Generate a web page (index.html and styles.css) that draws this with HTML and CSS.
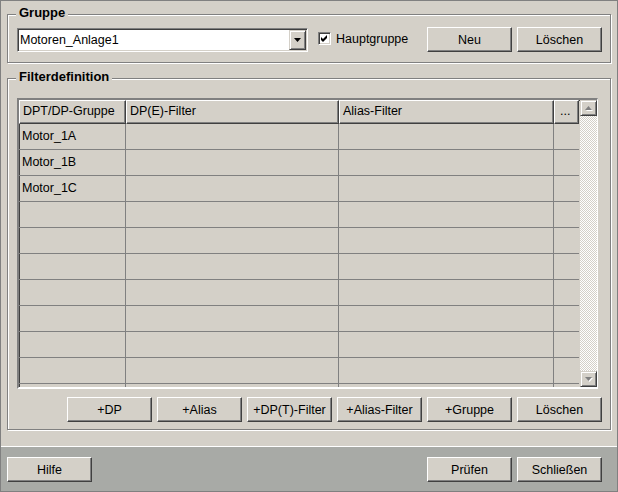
FILE: index.html
```html
<!DOCTYPE html>
<html lang="de">
<head>
<meta charset="utf-8">
<title>Filter</title>
<link rel="stylesheet" href="styles.css">
</head>
<body>
<div class="window">
  <div class="main">
    <div class="frame frame-gruppe">
      <span class="legend">Gruppe</span>
      <div class="row">
        <div class="combo">
          <span class="combo-text">Motoren_Anlage1</span>
          <span class="combo-btn"><svg width="7" height="4" viewBox="0 0 7 4"><path d="M0 0h7L3.5 4z" fill="#000"/></svg></span>
        </div>
        <label class="check">
          <span class="check-box"><svg width="9" height="9" viewBox="0 0 9 9"><path d="M1 3L3 5L7 1L7 4L3 8L1 6Z" fill="#000"/></svg></span>
          <span class="check-label">Hauptgruppe</span>
        </label>
        <div class="btn-group">
          <button class="btn">Neu</button>
          <button class="btn">Löschen</button>
        </div>
      </div>
    </div>

    <div class="frame frame-filter">
      <span class="legend">Filterdefinition</span>
      <div class="table">
        <div class="grid">
          <div class="head">
            <div class="hcell c1">DPT/DP-Gruppe</div>
            <div class="hcell c2">DP(E)-Filter</div>
            <div class="hcell c3">Alias-Filter</div>
            <div class="hcell c4 dots">...</div>
          </div>
          <div class="body">
            <div class="trow"><div class="cell c1">Motor_1A</div><div class="cell c2"></div><div class="cell c3"></div><div class="cell c4"></div></div>
            <div class="trow"><div class="cell c1">Motor_1B</div><div class="cell c2"></div><div class="cell c3"></div><div class="cell c4"></div></div>
            <div class="trow"><div class="cell c1">Motor_1C</div><div class="cell c2"></div><div class="cell c3"></div><div class="cell c4"></div></div>
            <div class="trow"><div class="cell c1"></div><div class="cell c2"></div><div class="cell c3"></div><div class="cell c4"></div></div>
            <div class="trow"><div class="cell c1"></div><div class="cell c2"></div><div class="cell c3"></div><div class="cell c4"></div></div>
            <div class="trow"><div class="cell c1"></div><div class="cell c2"></div><div class="cell c3"></div><div class="cell c4"></div></div>
            <div class="trow"><div class="cell c1"></div><div class="cell c2"></div><div class="cell c3"></div><div class="cell c4"></div></div>
            <div class="trow"><div class="cell c1"></div><div class="cell c2"></div><div class="cell c3"></div><div class="cell c4"></div></div>
            <div class="trow"><div class="cell c1"></div><div class="cell c2"></div><div class="cell c3"></div><div class="cell c4"></div></div>
            <div class="trow"><div class="cell c1"></div><div class="cell c2"></div><div class="cell c3"></div><div class="cell c4"></div></div>
            <div class="trow"><div class="cell c1"></div><div class="cell c2"></div><div class="cell c3"></div><div class="cell c4"></div></div>
          </div>
        </div>
        <div class="scrollbar">
          <span class="sb-btn"><svg width="7" height="4" viewBox="0 0 7 4"><path d="M3.5 0L7 4H0z" fill="#808080"/></svg></span>
          <span class="sb-track"></span>
          <span class="sb-btn"><svg width="7" height="4" viewBox="0 0 7 4"><path d="M0 0h7L3.5 4z" fill="#808080"/></svg></span>
        </div>
      </div>
      <div class="btn-row">
        <button class="btn">+DP</button>
        <button class="btn">+Alias</button>
        <button class="btn">+DP(T)-Filter</button>
        <button class="btn">+Alias-Filter</button>
        <button class="btn">+Gruppe</button>
        <button class="btn">Löschen</button>
      </div>
    </div>
  </div>
  <div class="footer">
    <button class="btn">Hilfe</button>
    <div class="btn-group">
      <button class="btn">Prüfen</button>
      <button class="btn">Schließen</button>
    </div>
  </div>
</div>
</body>
</html>
```

FILE: styles.css
```css
* { box-sizing: border-box; }

html, body {
  margin: 0;
  padding: 0;
  background: #d4d0c8;
}

body {
  font-family: "Liberation Sans", Arial, sans-serif;
  font-size: 12.5px;
  color: #000;
}

.window {
  width: 618px;
  height: 492px;
  border: 1px solid #808080;
  background: #d4d0c8;
  display: flex;
  flex-direction: column;
}

.main {
  height: 445px;
  padding: 13px 0 0 6px;
}

.frame {
  position: relative;
  width: 604px;
  border: 1px solid #808080;
  box-shadow: 1px 1px 0 #fff, inset 1px 1px 0 #fff;
}

.frame-gruppe {
  height: 49px;
  padding: 12px 8px 0 9px;
}

.frame-filter {
  height: 352px;
  margin-top: 15px;
  padding: 19px 8px 0 9px;
}

.legend {
  position: absolute;
  top: -9px;
  left: 8px;
  padding: 0 3px;
  line-height: 14px;
  font-size: 13px;
  font-weight: bold;
  background: #d4d0c8;
}

.row {
  display: flex;
  align-items: center;
  height: 25px;
}

.combo {
  width: 291px;
  height: 24px;
  display: flex;
  align-items: center;
  background: #fff;
  border: 1px solid;
  border-color: #808080 #fff #fff #808080;
  box-shadow: inset 1px 1px 0 #404040, inset -1px -1px 0 #d4d0c8;
  padding: 1px 1px 1px 2px;
}

.combo-text {
  flex: 1;
  line-height: 20px;
}

.combo-btn {
  width: 17px;
  height: 20px;
  display: flex;
  align-items: center;
  justify-content: center;
  background: #d4d0c8;
  border: 1px solid;
  border-color: #d4d0c8 #404040 #404040 #d4d0c8;
  box-shadow: inset 1px 1px 0 #fff, inset -1px -1px 0 #808080;
}

.check {
  display: flex;
  align-items: center;
  margin-left: 10px;
  margin-top: -2px;
}

.check-box {
  width: 13px;
  height: 13px;
  background: #fff;
  border: 1px solid;
  border-color: #808080 #fff #fff #808080;
  box-shadow: inset 1px 1px 0 #404040, inset -1px -1px 0 #d4d0c8;
  display: flex;
  align-items: center;
  justify-content: center;
}

.check-label {
  margin-left: 5px;
}

.btn-group {
  display: flex;
  gap: 5px;
  margin-left: auto;
}

.btn {
  width: 85px;
  height: 25px;
  margin: 0;
  padding: 0;
  font-family: "Liberation Sans", Arial, sans-serif;
  font-size: 12.5px;
  color: #000;
  background: #d4d0c8;
  border: 1px solid;
  border-color: #fff #404040 #404040 #fff;
  box-shadow: inset -1px -1px 0 #808080;
  border-radius: 0;
}

.table {
  display: flex;
  width: 581px;
  height: 291px;
  border-style: solid;
  border-width: 2px 1px 2px 2px;
  border-color: #808080 #fff #fff #808080;
  box-shadow: inset 1px 1px 0 #404040;
  background: #d4d0c8;
}

.grid {
  width: 560px;
  display: flex;
  flex-direction: column;
  overflow: hidden;
}

.head {
  display: flex;
  height: 24px;
  flex: none;
}

.hcell {
  height: 24px;
  line-height: 21px;
  padding-left: 3px;
  border: 1px solid;
  border-color: #fff #404040 #404040 #fff;
  box-shadow: inset -1px -1px 0 #808080;
  white-space: nowrap;
  overflow: hidden;
}

.c1 { width: 107px; }
.c2 { width: 213px; }
.c3 { width: 215px; }
.c4 { width: 25px; }

.dots {
  padding-left: 5px;
}

.body {
  flex: 1;
  overflow: hidden;
}

.trow {
  display: flex;
  height: 26px;
  border-bottom: 1px solid #808080;
}

.cell {
  height: 25px;
  line-height: 25px;
  padding-left: 3px;
  border-right: 1px solid #808080;
}

.cell.c4 {
  border-right: none;
}

.scrollbar {
  width: 17px;
  margin-left: 1px;
  display: flex;
  flex-direction: column;
}

.sb-btn {
  width: 17px;
  height: 16px;
  flex: none;
  display: flex;
  align-items: center;
  justify-content: center;
  background: #d4d0c8;
  border: 1px solid;
  border-color: #d4d0c8 #404040 #404040 #d4d0c8;
  box-shadow: inset 1px 1px 0 #fff, inset -1px -1px 0 #808080;
}

.sb-btn svg {
  filter: drop-shadow(1px 1px 0 #fff);
}

.sb-track {
  flex: 1;
  background: repeating-conic-gradient(#fff 0 25%, #d4d0c8 0 50%) 0 0 / 2px 2px;
}

.btn-row {
  display: flex;
  justify-content: flex-end;
  gap: 5px;
  margin-top: 8px;
}

.footer {
  flex: 1;
  background: #a8aaa6;
  border-top: 1px solid #fff;
  padding: 10px 15px 0 6px;
  display: flex;
  align-items: flex-start;
}
```
